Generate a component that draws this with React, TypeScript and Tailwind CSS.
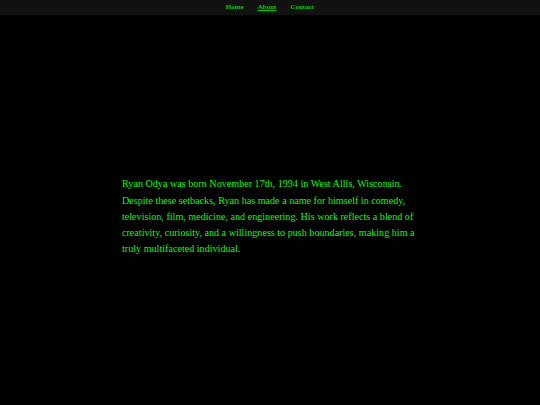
export default function App() {
  const links = ["Home", "About", "Contact"];
  return (
    <div className="min-h-screen bg-black flex flex-col font-['Liberation_Serif',serif]">
      <nav className="h-[15px] bg-[#111111] flex items-center justify-center gap-[14px] text-[7px] font-bold text-[#00cc00]">
        {links.map((link) => (
          <a key={link} href="#" className={link === "About" ? "underline" : ""}>
            {link}
          </a>
        ))}
      </nav>
      <main className="flex-1 flex items-center justify-center pt-[14px]">
        <p className="w-[298px] pl-[1px] text-[10.15px] leading-[16.25px] text-[#00ff00]">
          Ryan Odya was born November 17th, 1994 in West Allis, Wisconsin. Despite these setbacks, Ryan has made a name for
          himself in comedy, television, film, medicine, and engineering. His work reflects a blend of creativity,
          curiosity, and a willingness to push boundaries, making him a truly multifaceted individual.
        </p>
      </main>
    </div>
  );
}
